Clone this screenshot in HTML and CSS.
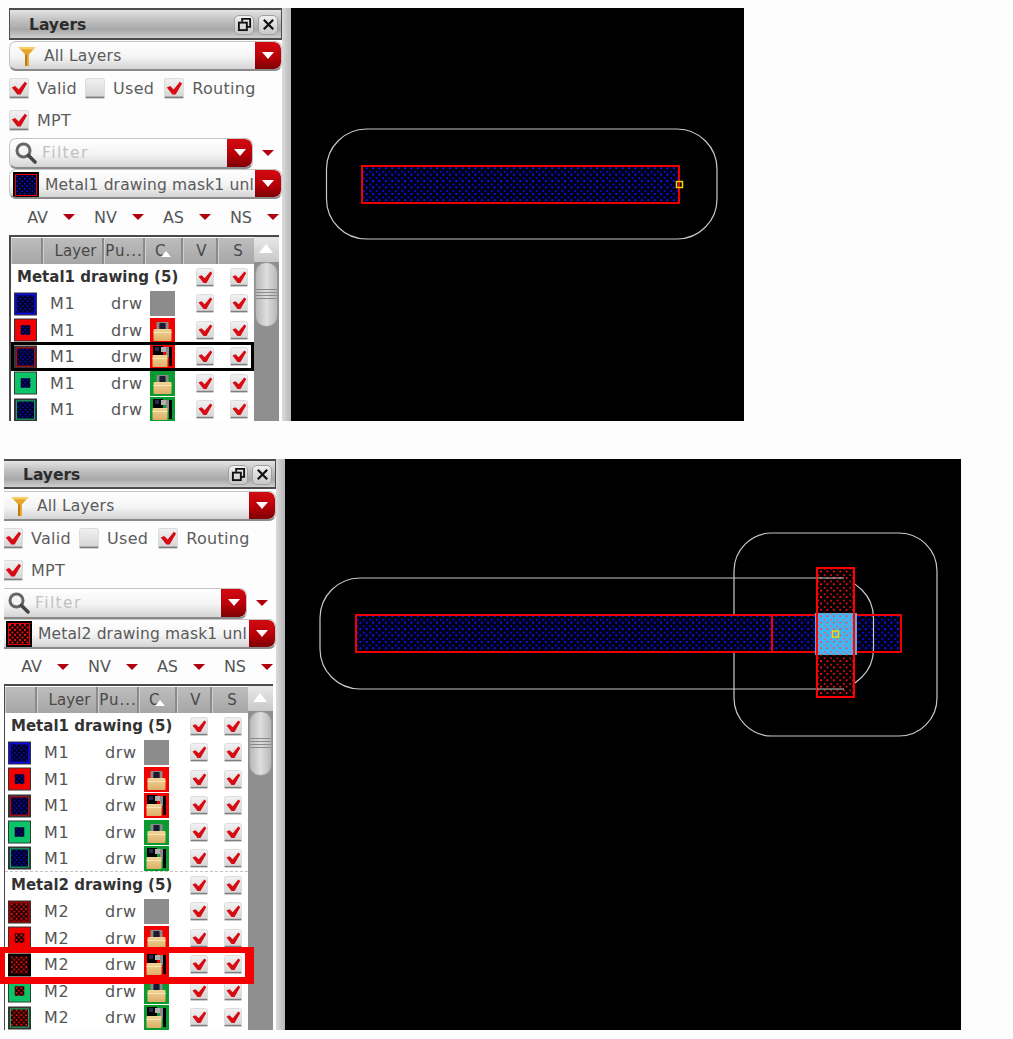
FILE: index.html
```html
<!DOCTYPE html>
<html lang="en">
<head>
<meta charset="utf-8">
<title>Layers</title>
<link rel="stylesheet" href="styles.css">
</head>
<body>
<svg class="defs" width="0" height="0" aria-hidden="true">
  <defs>
    <pattern id="dots-blue" width="6.400" height="6.400" patternUnits="userSpaceOnUse"><rect width="6.400" height="6.400" fill="#000014"/><rect x="1" y="1" width="2" height="2" fill="#1414ff" shape-rendering="crispEdges"/><rect x="4.200" y="4.200" width="2" height="2" fill="#0808d8" shape-rendering="crispEdges"/></pattern>
    <pattern id="dots-red" width="6.400" height="6.400" patternUnits="userSpaceOnUse"><rect width="6.400" height="6.400" fill="#000"/><rect x="1" y="1" width="2" height="2" fill="#f01010" shape-rendering="crispEdges"/><rect x="4.200" y="4.200" width="2" height="2" fill="#d00808" shape-rendering="crispEdges"/></pattern>
    <pattern id="dots-red-cut" width="6.400" height="6.400" patternUnits="userSpaceOnUse"><rect width="6.400" height="6.400" fill="#3db7f6"/><rect x="1" y="1" width="2" height="2" fill="#e85060" shape-rendering="crispEdges"/><rect x="4.200" y="4.200" width="2" height="2" fill="#d86a80" shape-rendering="crispEdges"/></pattern>
    <pattern id="sw-blue" width="5" height="5" patternUnits="userSpaceOnUse"><rect width="5" height="5" fill="#000024"/><rect x="1" y="1" width="1.400" height="1.400" fill="#1414ff"/><rect x="3.500" y="3.500" width="1.400" height="1.400" fill="#1414ff"/></pattern>
    <pattern id="sw-red" width="5" height="5" patternUnits="userSpaceOnUse"><rect width="5" height="5" fill="#140000"/><rect x="0.500" y="0.500" width="2" height="2" fill="#e01010"/><rect x="3" y="3" width="2" height="2" fill="#e01010"/></pattern>
    <linearGradient id="lock-body" x1="0" y1="0" x2="0" y2="1"><stop offset="0" stop-color="#f2d595"/><stop offset="1" stop-color="#dcae68"/></linearGradient>
    <linearGradient id="cb-bg" x1="0" y1="0" x2="0" y2="1"><stop offset="0" stop-color="#f2f2f2"/><stop offset="1" stop-color="#d4d4d4"/></linearGradient>

    <symbol id="sw-m1-a" viewBox="0 0 24 24"><rect width="24" height="24" fill="#333"/><rect x="1" y="1" width="22" height="22" fill="#0a0ad8"/><rect x="3" y="3" width="18" height="18" fill="url(#sw-blue)"/></symbol>
    <symbol id="sw-m1-b" viewBox="0 0 24 24"><rect width="24" height="24" fill="#333"/><rect x="1" y="1" width="22" height="22" fill="#f40000"/><rect x="7" y="7" width="10" height="10" fill="url(#sw-blue)"/></symbol>
    <symbol id="sw-m1-c" viewBox="0 0 24 24"><rect width="24" height="24" fill="#333"/><rect x="2" y="2" width="20" height="20" fill="#e00000"/><rect x="3" y="3" width="18" height="18" fill="url(#sw-blue)"/></symbol>
    <symbol id="sw-m1-d" viewBox="0 0 24 24"><rect width="24" height="24" fill="#333"/><rect x="1" y="1" width="22" height="22" fill="#0cc468"/><rect x="7" y="7" width="10" height="10" fill="url(#sw-blue)"/></symbol>
    <symbol id="sw-m1-e" viewBox="0 0 24 24"><rect width="24" height="24" fill="#333"/><rect x="2" y="2" width="20" height="20" fill="#0cc468"/><rect x="3" y="3" width="18" height="18" fill="url(#sw-blue)"/></symbol>
    <symbol id="sw-m1-f" viewBox="0 0 26 26"><rect width="26" height="26" fill="#000"/><rect x="2" y="2" width="22" height="22" fill="#f00000"/><rect x="3" y="3" width="20" height="20" fill="url(#sw-blue)"/></symbol>
    <symbol id="sw-m2-a" viewBox="0 0 24 24"><rect width="24" height="24" fill="#333"/><rect x="1" y="1" width="22" height="22" fill="#900000"/><rect x="3" y="3" width="18" height="18" fill="url(#sw-red)"/></symbol>
    <symbol id="sw-m2-b" viewBox="0 0 24 24"><rect width="24" height="24" fill="#333"/><rect x="1" y="1" width="22" height="22" fill="#f40000"/><rect x="7" y="7" width="10" height="10" fill="url(#sw-red)"/></symbol>
    <symbol id="sw-m2-c" viewBox="0 0 24 24"><rect width="24" height="24" fill="#000"/><rect x="3" y="3" width="18" height="18" fill="url(#sw-red)"/></symbol>
    <symbol id="sw-m2-d" viewBox="0 0 24 24"><rect width="24" height="24" fill="#333"/><rect x="1" y="1" width="22" height="22" fill="#0cc468"/><rect x="7" y="7" width="10" height="10" fill="url(#sw-red)"/></symbol>
    <symbol id="sw-m2-e" viewBox="0 0 24 24"><rect width="24" height="24" fill="#333"/><rect x="2" y="2" width="20" height="20" fill="#0cc468"/><rect x="3" y="3" width="18" height="18" fill="url(#sw-red)"/></symbol>
    <symbol id="sw-m2-f" viewBox="0 0 26 26"><rect width="26" height="26" fill="#000"/><rect x="2" y="2" width="22" height="22" fill="#f00000"/><rect x="3" y="3" width="20" height="20" fill="url(#sw-red)"/></symbol>

    <symbol id="lock-full" viewBox="0 0 25 25"><path d="M8 11V5.500h9V11" fill="none" stroke="#8a8a8a" stroke-width="3"/><rect x="9.500" y="5" width="6" height="6" fill="#1a1a30"/><rect x="3.500" y="11" width="18" height="12" rx="1" fill="url(#lock-body)"/><rect x="3.500" y="14" width="18" height="1" fill="#f8e6b8"/></symbol>
    <symbol id="lock-half" viewBox="0 0 25 25"><rect x="3" y="2" width="10" height="9" fill="#000"/><rect x="5" y="3" width="4" height="4" fill="#2a2a50"/><path d="M14 3h8v19h-3V8h-5z" fill="#000"/><rect x="16" y="3" width="3" height="10" fill="#8a8a8a"/><rect x="11" y="3" width="5" height="5" fill="#b0b0b0"/><rect x="2.500" y="11" width="15" height="12" rx="1" fill="url(#lock-body)"/><rect x="2.500" y="14" width="15" height="1" fill="#f8e6b8"/></symbol>

    <symbol id="check-on" viewBox="0 0 18 19"><rect x="0.500" y="0.500" width="17" height="17" rx="2" fill="url(#cb-bg)" stroke="#dcdcdc"/><path d="M0.500 17.600h17" stroke="#7f7f7f" stroke-width="1.600"/><path d="M2.500 8.500l3-1.200 3.200 3L14.300 3.500l2 1.500-5.800 10H7.500z" fill="#d80a12"/></symbol>
    <symbol id="check-off" viewBox="0 0 18 19"><rect x="0.500" y="0.500" width="17" height="17" rx="2" fill="url(#cb-bg)" stroke="#dcdcdc"/><path d="M0.500 17.600h17" stroke="#7f7f7f" stroke-width="1.600"/></symbol>
    <symbol id="funnel" viewBox="0 0 20 22"><path d="M1 1h18l-7 8v12H8V9z" fill="#e8a52c"/><path d="M8 9h2v12H8z" fill="#b87a14"/><path d="M1 1h18l-2 2.500H3z" fill="#f6cf6a"/></symbol>
    <symbol id="lens" viewBox="0 0 22 22"><circle cx="8.500" cy="8.500" r="6.500" fill="#f4f4f4" stroke="#666" stroke-width="3"/><path d="M13.500 13.500l6.500 6.500" stroke="#444" stroke-width="3.500" stroke-linecap="round"/></symbol>
    <symbol id="restore" viewBox="0 0 16 16"><path d="M5.500 5V2h8.500v8.500h-3.500" fill="none" stroke="#111" stroke-width="2"/><rect x="2" y="6" width="8.500" height="8" fill="none" stroke="#111" stroke-width="2"/></symbol>
    <symbol id="close" viewBox="0 0 16 16"><path d="M3 3l10 10M13 3L3 13" stroke="#111" stroke-width="2.400"/></symbol>
  </defs>
</svg>

<main class="page">

  <section class="figure figure-one">
    <div class="panel">
      <header class="title"><span class="title-text">Layers</span><span class="title-btn"><svg class="i16"><use href="#restore"/></svg></span><span class="title-btn"><svg class="i16"><use href="#close"/></svg></span></header>
      <div class="combo"><svg class="funnel"><use href="#funnel"/></svg><span class="combo-text">All Layers</span><span class="red-btn"></span></div>
      <div class="checks">
        <label class="chk chk-valid"><svg class="cb"><use href="#check-on"/></svg>Valid</label>
        <label class="chk chk-used"><svg class="cb"><use href="#check-off"/></svg>Used</label>
        <label class="chk"><svg class="cb"><use href="#check-on"/></svg>Routing</label>
        <label class="chk chk-mpt"><svg class="cb"><use href="#check-on"/></svg>MPT</label>
      </div>
      <div class="filter-row">
        <div class="combo combo-filter"><svg class="lens"><use href="#lens"/></svg><span class="combo-text muted">Filter</span><span class="red-btn"></span></div>
        <span class="tri"></span>
      </div>
      <div class="combo combo-layer"><svg class="combo-swatch"><use href="#sw-m1-f"/></svg><span class="combo-text clip">Metal1 drawing mask1 unl</span><span class="red-btn"></span></div>
      <div class="toggles"><span>AV</span><i class="tri"></i><span>NV</span><i class="tri"></i><span>AS</span><i class="tri"></i><span>NS</span><i class="tri"></i></div>
      <div class="table">
        <div class="table-main">
          <div class="head"><span></span><span class="head-layer">Layer</span><span class="head-pu">Pu...</span><span class="sort">C</span><span class="head-v">V</span><span class="head-v">S</span></div>
          <div class="row group"><b>Metal1 drawing (5)</b><svg class="cb c5"><use href="#check-on"/></svg><svg class="cb c6"><use href="#check-on"/></svg></div>
          <div class="row"><svg class="sw"><use href="#sw-m1-a"/></svg><span class="lay">M1</span><span class="pur">drw</span><span class="color gray"></span><svg class="cb c5"><use href="#check-on"/></svg><svg class="cb c6"><use href="#check-on"/></svg></div>
          <div class="row"><svg class="sw"><use href="#sw-m1-b"/></svg><span class="lay">M1</span><span class="pur">drw</span><span class="color red"><svg class="lk"><use href="#lock-full"/></svg></span><svg class="cb c5"><use href="#check-on"/></svg><svg class="cb c6"><use href="#check-on"/></svg></div>
          <div class="row"><svg class="sw"><use href="#sw-m1-c"/></svg><span class="lay">M1</span><span class="pur">drw</span><span class="color red"><svg class="lk"><use href="#lock-half"/></svg></span><svg class="cb c5"><use href="#check-on"/></svg><svg class="cb c6"><use href="#check-on"/></svg></div>
          <div class="row"><svg class="sw"><use href="#sw-m1-d"/></svg><span class="lay">M1</span><span class="pur">drw</span><span class="color green"><svg class="lk"><use href="#lock-full"/></svg></span><svg class="cb c5"><use href="#check-on"/></svg><svg class="cb c6"><use href="#check-on"/></svg></div>
          <div class="row"><svg class="sw"><use href="#sw-m1-e"/></svg><span class="lay">M1</span><span class="pur">drw</span><span class="color green"><svg class="lk"><use href="#lock-half"/></svg></span><svg class="cb c5"><use href="#check-on"/></svg><svg class="cb c6"><use href="#check-on"/></svg></div>
        </div>
        <div class="scroll"><span class="scroll-up"></span><span class="thumb"></span></div>
      </div>
      <div class="mark mark-black"></div>
    </div>
    <div class="splitter"></div>
    <svg class="canvas canvas-one" viewBox="291 8 453 413">
      <rect class="metal" x="362" y="166" width="317" height="37" fill="url(#dots-blue)"/>
      <rect class="outline" x="326.500" y="129" width="390.500" height="110" rx="40" ry="40"/>
      <rect class="cursor" x="676.500" y="181.500" width="6" height="6"/>
    </svg>
  </section>

  <section class="figure figure-two">
    <div class="panel">
      <header class="title"><span class="title-text">Layers</span><span class="title-btn"><svg class="i16"><use href="#restore"/></svg></span><span class="title-btn"><svg class="i16"><use href="#close"/></svg></span></header>
      <div class="combo"><svg class="funnel"><use href="#funnel"/></svg><span class="combo-text">All Layers</span><span class="red-btn"></span></div>
      <div class="checks">
        <label class="chk chk-valid"><svg class="cb"><use href="#check-on"/></svg>Valid</label>
        <label class="chk chk-used"><svg class="cb"><use href="#check-off"/></svg>Used</label>
        <label class="chk"><svg class="cb"><use href="#check-on"/></svg>Routing</label>
        <label class="chk chk-mpt"><svg class="cb"><use href="#check-on"/></svg>MPT</label>
      </div>
      <div class="filter-row">
        <div class="combo combo-filter"><svg class="lens"><use href="#lens"/></svg><span class="combo-text muted">Filter</span><span class="red-btn"></span></div>
        <span class="tri"></span>
      </div>
      <div class="combo combo-layer"><svg class="combo-swatch"><use href="#sw-m2-f"/></svg><span class="combo-text clip">Metal2 drawing mask1 unl</span><span class="red-btn"></span></div>
      <div class="toggles"><span>AV</span><i class="tri"></i><span>NV</span><i class="tri"></i><span>AS</span><i class="tri"></i><span>NS</span><i class="tri"></i></div>
      <div class="table">
        <div class="table-main">
          <div class="head"><span></span><span class="head-layer">Layer</span><span class="head-pu">Pu...</span><span class="sort">C</span><span class="head-v">V</span><span class="head-v">S</span></div>
          <div class="row group"><b>Metal1 drawing (5)</b><svg class="cb c5"><use href="#check-on"/></svg><svg class="cb c6"><use href="#check-on"/></svg></div>
          <div class="row"><svg class="sw"><use href="#sw-m1-a"/></svg><span class="lay">M1</span><span class="pur">drw</span><span class="color gray"></span><svg class="cb c5"><use href="#check-on"/></svg><svg class="cb c6"><use href="#check-on"/></svg></div>
          <div class="row"><svg class="sw"><use href="#sw-m1-b"/></svg><span class="lay">M1</span><span class="pur">drw</span><span class="color red"><svg class="lk"><use href="#lock-full"/></svg></span><svg class="cb c5"><use href="#check-on"/></svg><svg class="cb c6"><use href="#check-on"/></svg></div>
          <div class="row"><svg class="sw"><use href="#sw-m1-c"/></svg><span class="lay">M1</span><span class="pur">drw</span><span class="color red"><svg class="lk"><use href="#lock-half"/></svg></span><svg class="cb c5"><use href="#check-on"/></svg><svg class="cb c6"><use href="#check-on"/></svg></div>
          <div class="row"><svg class="sw"><use href="#sw-m1-d"/></svg><span class="lay">M1</span><span class="pur">drw</span><span class="color green"><svg class="lk"><use href="#lock-full"/></svg></span><svg class="cb c5"><use href="#check-on"/></svg><svg class="cb c6"><use href="#check-on"/></svg></div>
          <div class="row row-end"><svg class="sw"><use href="#sw-m1-e"/></svg><span class="lay">M1</span><span class="pur">drw</span><span class="color green"><svg class="lk"><use href="#lock-half"/></svg></span><svg class="cb c5"><use href="#check-on"/></svg><svg class="cb c6"><use href="#check-on"/></svg></div>
          <div class="row group"><b>Metal2 drawing (5)</b><svg class="cb c5"><use href="#check-on"/></svg><svg class="cb c6"><use href="#check-on"/></svg></div>
          <div class="row"><svg class="sw"><use href="#sw-m2-a"/></svg><span class="lay">M2</span><span class="pur">drw</span><span class="color gray"></span><svg class="cb c5"><use href="#check-on"/></svg><svg class="cb c6"><use href="#check-on"/></svg></div>
          <div class="row"><svg class="sw"><use href="#sw-m2-b"/></svg><span class="lay">M2</span><span class="pur">drw</span><span class="color red"><svg class="lk"><use href="#lock-full"/></svg></span><svg class="cb c5"><use href="#check-on"/></svg><svg class="cb c6"><use href="#check-on"/></svg></div>
          <div class="row"><svg class="sw"><use href="#sw-m2-c"/></svg><span class="lay">M2</span><span class="pur">drw</span><span class="color red"><svg class="lk"><use href="#lock-half"/></svg></span><svg class="cb c5"><use href="#check-on"/></svg><svg class="cb c6"><use href="#check-on"/></svg></div>
          <div class="row"><svg class="sw"><use href="#sw-m2-d"/></svg><span class="lay">M2</span><span class="pur">drw</span><span class="color green"><svg class="lk"><use href="#lock-full"/></svg></span><svg class="cb c5"><use href="#check-on"/></svg><svg class="cb c6"><use href="#check-on"/></svg></div>
          <div class="row"><svg class="sw"><use href="#sw-m2-e"/></svg><span class="lay">M2</span><span class="pur">drw</span><span class="color green"><svg class="lk"><use href="#lock-half"/></svg></span><svg class="cb c5"><use href="#check-on"/></svg><svg class="cb c6"><use href="#check-on"/></svg></div>
        </div>
        <div class="scroll"><span class="scroll-up"></span><span class="thumb"></span></div>
      </div>
      <div class="mark mark-red"></div>
    </div>
    <div class="splitter"></div>
    <svg class="canvas canvas-two" viewBox="285 459 676 571">
      <rect class="outline" x="734" y="533" width="203" height="203" rx="38" ry="38"/>
      <rect class="metal" x="356" y="615" width="545" height="37" fill="url(#dots-blue)"/>
      <path class="red-line" d="M772 615v38"/>
      <rect class="outline" x="320" y="578" width="553.500" height="111" rx="40" ry="40"/>
      <rect class="metal thick" x="817" y="568" width="37" height="129" fill="url(#dots-red)"/>
      <path class="outline" d="M817 578h27M817 689h27"/>
      <rect x="815" y="613" width="42" height="42" fill="url(#dots-red-cut)"/>
      <path class="red-line thick" d="M817 613v42M854 613v42"/>
      <path class="red-line" d="M857 615h44M857 652h44"/>
      <rect class="cursor" x="832.500" y="631" width="6" height="6"/>
    </svg>
  </section>

</main>
</body>
</html>
```

FILE: styles.css
```css
* { box-sizing: border-box; }
html, body { margin: 0; padding: 0; background: #fdfdfd; }
body { font-family: "DejaVu Sans", sans-serif; color: #555; overflow: hidden; }
.defs { position: absolute; width: 0; height: 0; }
.page { display: flex; flex-direction: column; padding-top: 8px; }
.figure { display: flex; align-items: stretch; }
.figure-one { height: 413px; margin-left: 9px; }
.figure-two { height: 571px; margin-left: 3px; margin-top: 38px; }

.panel { position: relative; width: 273px; flex: none; overflow: hidden; font-size: 15.500px; }
.figure-two .panel { overflow: visible; height: 571px; }
.figure-two .panel > :not(.mark) { clip-path: inset(-2px -40px -2px 1px); }
.splitter { width: 9px; flex: none; background: linear-gradient(90deg, #dcdcdc, #c4c4c4 60%, #b8b8b8); }
.canvas { display: block; flex: none; background: #000; }
.canvas-one { width: 453px; height: 413px; }
.canvas-two { width: 676px; height: 571px; }
.outline { fill: none; stroke: #c8c8c8; stroke-width: 1.200; }
.metal { stroke: #ee0000; stroke-width: 2; shape-rendering: crispEdges; }
.thick { stroke: #ff0000; stroke-width: 2.500; }
.red-line { fill: none; stroke: #ee0000; stroke-width: 2; shape-rendering: crispEdges; }
.red-line.thick { stroke: #ff0000; stroke-width: 2.500; }
.cursor { fill: none; stroke: #f5d800; stroke-width: 1.500; }

.title { height: 32px; display: flex; align-items: center; gap: 4px; padding: 1px 3px 0 19px; border: 2px solid #4c4c4c; border-width: 2px 1px 2px 1px; background: linear-gradient(180deg, #e4e4e4 0%, #c2c2c2 35%, #a8a8a8 70%, #cfcfcf 100%); }
.figure-two .title { height: 30px; }
.title-text { flex: 1; font-weight: 700; font-size: 15.500px; color: #2c2c2c; }
.title-btn { width: 20px; height: 20px; display: flex; align-items: center; justify-content: center; border: 1px solid #a0a0a0; border-radius: 5px; background: linear-gradient(180deg, #f0f0f0, #c8c8c8); }
.i16 { width: 15px; height: 15px; }

.combo { position: relative; height: 30px; margin-top: 1px; display: flex; align-items: center; border: 1px solid #c4c4c4; border-bottom: 2px solid #8a8a8a; border-radius: 7px; background: linear-gradient(180deg, #ffffff 0%, #f4f4f4 55%, #d4d4d4 100%); padding: 1px 26px 0 0; overflow: hidden; }
.figure-two .combo { margin-top: 2px; border-radius: 0 7px 7px 0; border-left: 0; }
.combo-text { white-space: nowrap; overflow: hidden; letter-spacing: 0.200px; color: #5a5a5a; }
.funnel { width: 20px; height: 21px; margin: 0 7px 0 7px; flex: none; }
.lens { width: 22px; height: 22px; margin: 0 5px 0 5px; flex: none; }
.combo-swatch { width: 26px; height: 26px; margin: 0 6px 0 3px; flex: none; }
.muted { color: #c2c2c2; font-weight: 400; }
.clip { flex: 1; letter-spacing: 0.150px; }
.red-btn { position: absolute; right: 0; top: 0; bottom: 0; width: 26px; border-radius: 0 7px 7px 0; background: linear-gradient(180deg, #d40a12 0%, #b80008 55%, #7c0004 100%); display: flex; align-items: center; justify-content: center; }
.red-btn::after { content: ""; border: 6px solid transparent; border-top: 7px solid #fff; border-bottom: 0; }

.checks { height: 66px; display: flex; flex-wrap: wrap; align-content: flex-start; padding-top: 1px; font-size: 16px; }
.chk { height: 32px; display: flex; align-items: center; margin-right: 10px; color: #5c5c5c; letter-spacing: 0.300px; }
.chk-valid { margin-right: 8px; }
.chk-mpt { margin-right: 0; }
.cb { width: 18px; height: 19px; flex: none; }
.chk .cb { width: 20px; height: 21px; margin-right: 8px; margin-left: 0; }

.filter-row { display: flex; align-items: center; height: 32px; }
.combo-filter, .figure-two .combo-filter { width: 244px; height: 31px; margin-top: 0; }
.combo-filter .red-btn { width: 25px; }
.combo-filter .combo-text { letter-spacing: 1.400px; }
.filter-row .tri { margin-left: 9px; }
.tri { display: block; flex: none; width: 0; height: 0; border: 6px solid transparent; border-top: 6px solid #b00010; border-bottom: 0; }
.combo-layer, .figure-two .combo-layer { margin-top: 0; }
.figure-one .combo-layer { padding-top: 3px; }

.toggles { height: 36px; display: grid; grid-template-columns: 54px 12px 57px 12px 55px 12px 56px 12px; align-items: center; font-size: 16px; }
.figure-two .toggles { height: 35px; }
.toggles span { text-align: right; padding-right: 15px; white-space: nowrap; }

.table { position: relative; width: 270px; display: flex; border: solid #4a4a4a; border-width: 2px 0 0 2px; height: 186px; overflow: hidden; }
.figure-two .table { height: 346px; }
.table-main { width: 243px; flex: none; background: #fff; }
.head { height: 26px; display: grid; grid-template-columns: 32px 61px 41px 38px 35px 36px; background: linear-gradient(180deg, #bdbdbd, #a6a6a6); margin-top: 1px; }
.head span { display: flex; align-items: center; justify-content: center; border-right: 2px solid #8a8a8a; border-left: 1px solid #d0d0d0; font-size: 15px; color: #484848; }
.head span:last-child { border-right: 0; }
.head-layer { padding-left: 5px; }
.head-pu { letter-spacing: 1px; }
.head-v { padding-left: 3px; }
.sort { position: relative; justify-content: flex-start !important; padding-left: 9px; }
.sort::after { content: ""; position: absolute; left: 15px; top: 13px; border: 5px solid transparent; border-bottom: 6px solid #fff; border-top: 0; }
.row { height: 26.500px; display: grid; grid-template-columns: 34px 61px 44px 25px 39px 34px; align-items: center; }
.row-end { border-bottom: 1px dashed #c4c4c4; }
.group b { grid-column: 1 / span 4; padding-left: 6px; font-size: 15px; color: #333; white-space: nowrap; }
.sw { width: 23px; height: 24px; margin-left: 3px; }
.lay { padding-left: 5px; font-size: 16px; letter-spacing: 0.800px; }
.pur { padding-left: 5px; font-size: 16px; letter-spacing: 0.600px; }
.color { display: block; width: 25px; height: 25px; }
.gray { background: #8c8c8c; }
.red { background: #f40000; }
.green { background: #0a9a30; }
.lk { display: block; width: 25px; height: 25px; }
.c5 { margin-left: 21px; }
.c6 { margin-left: 16px; }

.scroll { width: 25px; flex: none; background: #8f8f8f; display: flex; flex-direction: column; align-items: stretch; }
.scroll-up { position: relative; height: 25px; flex: none; background: linear-gradient(180deg, #e8e8e8, #c8c8c8); }
.scroll-up::after { content: ""; position: absolute; left: 5px; top: 7px; border: 7px solid transparent; border-bottom: 9px solid #fff; border-top: 0; }
.thumb { display: block; margin: 0 1px; height: 65px; border-radius: 11px; border: 1px solid #999; background-image: repeating-linear-gradient(180deg, transparent 0 26px, #8a8a8a 26px 27px, transparent 27px 29px, #8a8a8a 29px 30px, transparent 30px 32px, #8a8a8a 32px 33px, transparent 33px 35px, #8a8a8a 35px 36px, transparent 36px 65px), linear-gradient(90deg, #b8b8b8, #dedede 50%, #b8b8b8); }

.mark { position: absolute; pointer-events: none; }
.mark-black { left: 2px; top: 334px; width: 243px; height: 29px; border: 3px solid #000; }
.mark-red { left: -3px; top: 488px; width: 254px; height: 37px; border: solid #f40000; border-width: 6px 9px 7px 5px; }
```
